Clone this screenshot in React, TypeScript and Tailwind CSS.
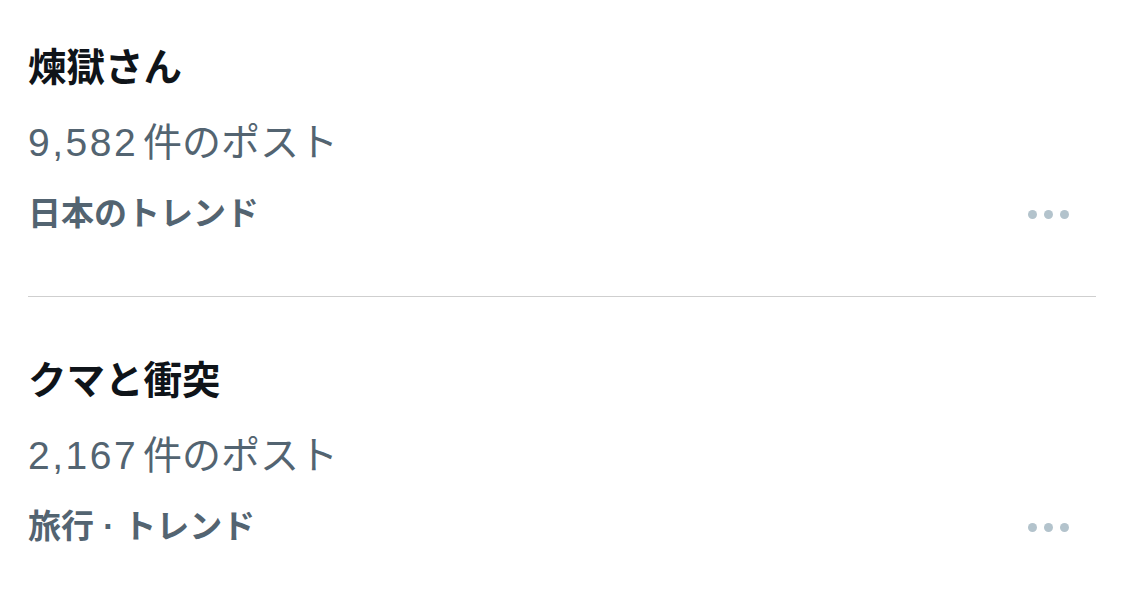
const trends = [
  { title: "煉獄さん", posts: "9,582", context: "日本のトレンド" },
  { title: "クマと衝突", posts: "2,167", context: "旅行 · トレンド" },
];

function MoreDots() {
  return (
    <div className="flex items-center gap-[7px] pr-[27px]">
      <span className="h-[9px] w-[9px] rounded-full bg-[#b3c3cc]" />
      <span className="h-[9px] w-[9px] rounded-full bg-[#b3c3cc]" />
      <span className="h-[9px] w-[9px] rounded-full bg-[#b3c3cc]" />
    </div>
  );
}

function TrendRow({ title, posts, context }: { title: string; posts: string; context: string }) {
  return (
    <div className="px-[28px]">
      <p className="text-[38.5px] leading-[52px] font-bold text-[#0f1419]">{title}</p>
      <p className="mt-[23px] text-[39px] leading-[52px] text-[#536471]">
        <span className="tracking-[2.5px]">{posts}</span>
        <span className="ml-[5px]">件のポスト</span>
      </p>
      <div className="mt-[23px] flex items-center justify-between">
        <p className="text-[33px] leading-[44px] font-bold text-[#536471]">{context}</p>
        <MoreDots />
      </div>
    </div>
  );
}

export default function App() {
  return (
    <div
      className="h-[598px] w-[1124px] overflow-hidden bg-white pt-[42px]"
      style={{ fontFamily: '"Liberation Sans", "Noto Sans CJK JP", sans-serif' }}
    >
      <TrendRow {...trends[0]} />
      <div className="mx-[28px] mt-[60px] mb-[58px] h-px bg-[#cfcfcf]" />
      <TrendRow {...trends[1]} />
    </div>
  );
}
